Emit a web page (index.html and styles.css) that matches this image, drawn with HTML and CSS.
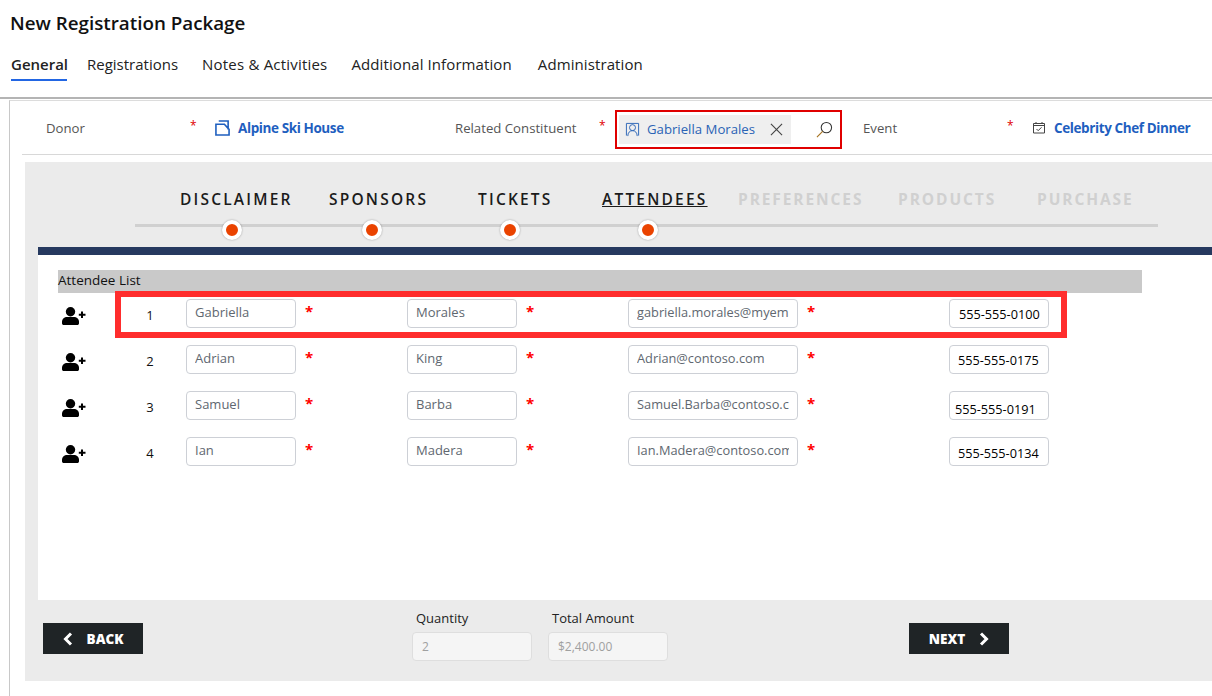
FILE: index.html
```html
<!DOCTYPE html>
<html lang="en">
<head>
    <meta charset="UTF-8">
    <title>New Registration Package</title>
    <link rel="stylesheet" href="styles.css">
</head>
<body>

    <!-- Header -->
    <div class="header">
        <h1 class="title">New Registration Package</h1>
        <div class="tabs">
            <div class="tab tab-active">General</div>
            <div class="tab tab-reg">Registrations</div>
            <div class="tab tab-notes">Notes &amp; Activities</div>
            <div class="tab tab-info">Additional Information</div>
            <div class="tab">Administration</div>
        </div>
    </div>

    <div class="content">
        <!-- Donor / constituent / event -->
        <div class="fields">
            <div class="field-label label-donor">Donor</div>
            <div class="req req-donor">*</div>
            <svg class="icon-account" viewBox="0 0 16 17"><path d="M4 1h10v9M1 4.500h9l5 5.500v6H1z" fill="none" stroke="#1f5fbf" stroke-width="1.700"/></svg>
            <div class="lookup-link link-donor">Alpine Ski House</div>
            <div class="field-label label-related">Related Constituent</div>
            <div class="req req-related">*</div>
            <div class="lookup">
                <div class="lookup-tag">
                    <svg class="icon-contact" viewBox="0 0 16 16"><path d="M1.500 14.500v-13h13v13" fill="none" stroke="#2a63b5"/><circle cx="8" cy="6" r="3.200" fill="none" stroke="#2a63b5"/><path d="M3 15c0-3.500 2-5.800 5-5.800s5 2.300 5 5.800" fill="none" stroke="#2a63b5"/></svg>
                    <span class="lookup-name">Gabriella Morales</span>
                    <svg class="icon-close" viewBox="0 0 14 14"><path d="M1 1l12 12M13 1L1 13" stroke="#444" stroke-width="1.200"/></svg>
                </div>
                <svg class="icon-search" viewBox="0 0 18 18"><circle cx="11" cy="7" r="5.500" fill="none" stroke="#333" stroke-width="1.100"/><path d="M7 11l-6 6" stroke="#a5721f" stroke-width="1.200"/></svg>
            </div>
            <div class="field-label label-event">Event</div>
            <div class="req req-event">*</div>
            <svg class="icon-calendar" viewBox="0 0 12 12"><path d="M.5 2h11v9.500H.5zM.5 4h11M3 .5V2M9 .5V2" fill="none" stroke="#444"/><path d="M3.500 7.500l1.700 1.700 3.300-3.400" fill="none" stroke="#444"/></svg>
            <div class="lookup-link">Celebrity Chef Dinner</div>
        </div>

        <div class="panel">
            <!-- Wizard steps -->
            <div class="steps">
                <div class="step step-1">DISCLAIMER</div>
                <div class="step step-2">SPONSORS</div>
                <div class="step step-3">TICKETS</div>
                <div class="step step-4 step-current">ATTENDEES</div>
                <div class="step step-5 step-off">PREFERENCES</div>
                <div class="step step-6 step-off">PRODUCTS</div>
                <div class="step step-7 step-off">PURCHASE</div>
            </div>
            <div class="track">
                <div class="dot dot-1"></div>
                <div class="dot dot-2"></div>
                <div class="dot dot-3"></div>
                <div class="dot dot-4"></div>
            </div>

            <!-- Attendees -->
            <div class="sheet">
                <div class="list-title">Attendee List</div>

                <div class="row">
                    <svg class="icon-add" viewBox="0 0 24 18"><use href="#user-plus"/></svg>
                    <div class="num">1</div>
                    <div class="cell"><div class="input"><div class="input-text">Gabriella</div></div><span class="star">*</span></div>
                    <div class="cell"><div class="input"><div class="input-text">Morales</div></div><span class="star">*</span></div>
                    <div class="cell cell-email"><div class="input input-email"><div class="input-text">gabriella.morales@myemail.com</div></div><span class="star">*</span></div>
                    <div class="input input-phone phone-a">555-555-0100</div>
                </div>
                <div class="row">
                    <svg class="icon-add" viewBox="0 0 24 18"><use href="#user-plus"/></svg>
                    <div class="num">2</div>
                    <div class="cell"><div class="input"><div class="input-text">Adrian</div></div><span class="star">*</span></div>
                    <div class="cell"><div class="input"><div class="input-text">King</div></div><span class="star">*</span></div>
                    <div class="cell cell-email"><div class="input input-email"><div class="input-text">Adrian@contoso.com</div></div><span class="star">*</span></div>
                    <div class="input input-phone phone-b">555-555-0175</div>
                </div>
                <div class="row">
                    <svg class="icon-add" viewBox="0 0 24 18"><use href="#user-plus"/></svg>
                    <div class="num">3</div>
                    <div class="cell"><div class="input"><div class="input-text">Samuel</div></div><span class="star">*</span></div>
                    <div class="cell"><div class="input"><div class="input-text">Barba</div></div><span class="star">*</span></div>
                    <div class="cell cell-email"><div class="input input-email"><div class="input-text">Samuel.Barba@contoso.com</div></div><span class="star">*</span></div>
                    <div class="input input-phone phone-c">555-555-0191</div>
                </div>
                <div class="row">
                    <svg class="icon-add" viewBox="0 0 24 18"><use href="#user-plus"/></svg>
                    <div class="num">4</div>
                    <div class="cell"><div class="input"><div class="input-text">Ian</div></div><span class="star">*</span></div>
                    <div class="cell"><div class="input"><div class="input-text">Madera</div></div><span class="star">*</span></div>
                    <div class="cell cell-email"><div class="input input-email"><div class="input-text">Ian.Madera@contoso.com</div></div><span class="star">*</span></div>
                    <div class="input input-phone phone-d">555-555-0134</div>
                </div>

                <!-- Red callout round the first row -->
                <div class="callout"></div>
            </div>

            <!-- Footer -->
            <div class="footer">
                <div class="btn btn-back">
                    <svg class="chevron" viewBox="0 0 10 14"><path d="M8 1.500L2.500 7 8 12.500" fill="none" stroke="#fff" stroke-width="3"/></svg>
                    <span>BACK</span>
                </div>
                <div class="total total-qty">
                    <div class="total-label">Quantity</div>
                    <div class="total-box">2</div>
                </div>
                <div class="total">
                    <div class="total-label">Total Amount</div>
                    <div class="total-box">$2,400.00</div>
                </div>
                <div class="btn btn-next">
                    <span>NEXT</span>
                    <svg class="chevron" viewBox="0 0 10 14"><path d="M2 1.500L7.500 7 2 12.500" fill="none" stroke="#fff" stroke-width="3"/></svg>
                </div>
            </div>
        </div>
    </div>

    <svg class="defs" width="0" height="0">
        <symbol id="user-plus" viewBox="0 0 24 18">
            <circle cx="8.500" cy="4.700" r="4.700" fill="#000"/>
            <path d="M0 15c0-3.300 2.500-5 5-5h7c2.500 0 5 1.700 5 5v1.200c0 1-.8 1.800-1.800 1.800H1.800C.8 18 0 17.200 0 16.200z" fill="#000"/>
            <path d="M20 4.500v6.500M16.800 7.700h6.700" stroke="#000" stroke-width="2"/>
        </symbol>
    </svg>

</body>
</html>
```

FILE: styles.css
```css
body {
    margin: 0;
    width: 1212px;
    height: 696px;
    overflow: hidden;
    background-color: #fff;
    font-family: "Open Sans", sans-serif;
    color: #111;
}

/* Header */
.header {
    height: 99px;
    padding-left: 11px;
    box-sizing: border-box;
    border-bottom: 2px solid #b4b4b4;
}

.title {
    margin: 0 0 0 -1px;
    padding-top: 10px;
    font-size: 18.800px;
    line-height: 27px;
    font-weight: 600;
    color: #111;
}

.tabs {
    display: flex;
    margin-top: 15px;
}

.tab {
    font-size: 15px;
    line-height: 25px;
    letter-spacing: 0.1px;
    padding-bottom: 2px;
    color: #222;
}

.tab-active {
    width: 56px;
    margin-right: 20px;
    letter-spacing: 0;
    font-weight: 600;
    border-bottom: 2px solid #2266e3;
}

.tab-reg {
    margin-right: 24px;
    letter-spacing: 0;
}

.tab-notes {
    margin-right: 24px;
    letter-spacing: 0.2px;
}

.tab-info {
    margin-right: 26px;
}

/* Content */
.content {
    height: 596px;
    margin: 1px 0 0 9px;
    padding-left: 12px;
    border-left: 1px solid #c8c8c8;
    border-top: 1px solid #dcdcdc;
    overflow: hidden;
}

.fields {
    display: flex;
    align-items: center;
    height: 53px;
    border-bottom: 1px solid #d8d8d8;
    font-size: 13.200px;
}

.field-label {
    flex: none;
    color: #555;
}

.label-donor {
    margin-left: 24px;
    width: 144px;
}

.req {
    flex: none;
    color: #e00000;
    font-size: 12px;
    margin-top: -4px;
}

.req-donor {
    width: 25px;
}

.link-donor {
    width: 217px;
    margin-left: 1px;
    letter-spacing: -0.3px;
}

.icon-account {
    flex: none;
    width: 15px;
    height: 16px;
    margin-right: 7px;
}

.lookup-link {
    flex: none;
    color: #1f5fbf;
    font-weight: 700;
    font-size: 13.500px;
    letter-spacing: -0.4px;
    white-space: nowrap;
}

.label-related {
    width: 144px;
}

.req-related {
    width: 16px;
}

.lookup {
    flex: none;
    display: flex;
    align-items: center;
    justify-content: space-between;
    width: 227px;
    height: 39px;
    margin: 4px 21px 0 0;
    padding: 0 7px 0 2px;
    box-sizing: border-box;
    border: 2px solid #e00000;
}

.lookup-tag {
    display: flex;
    align-items: center;
    width: 172px;
    height: 29px;
    padding-left: 6px;
    box-sizing: border-box;
    background-color: #efefef;
}

.lookup-name {
    color: #2a63b5;
    width: 123px;
    margin: -1px 0 0 7px;
    white-space: nowrap;
}

.icon-contact {
    width: 15px;
    height: 15px;
}

.icon-close {
    width: 13px;
    height: 13px;
}

.icon-search {
    width: 17px;
    height: 17px;
}

.label-event {
    width: 144px;
}

.req-event {
    width: 26px;
}

.icon-calendar {
    flex: none;
    width: 12px;
    height: 13px;
    margin-right: 9px;
}

/* Gray panel */
.panel {
    position: relative;
    margin: 7px 0 0 3px;
    height: 519px;
    padding-left: 13px;
    background-color: #ebebeb;
}

/* Wizard */
.steps {
    display: flex;
    height: 62px;
}

.step {
    padding-top: 27px;
    font-size: 15.500px;
    line-height: 20px;
    font-weight: 600;
    letter-spacing: 2.200px;
    white-space: nowrap;
    color: #1b1b1b;
}

.step-1 { margin-left: 142px; width: 149px; }
.step-2 { width: 149px; }
.step-3 { width: 124px; }
.step-4 { width: 136px; }
.step-5 { width: 160px; }
.step-6 { width: 139px; }

.step-current {
    text-decoration: underline;
}

.step-off {
    color: #d0d0d0;
    font-weight: 700;
    letter-spacing: 1.900px;
}

.track {
    position: relative;
    height: 3px;
    width: 1023px;
    margin-left: 97px;
    background-color: #d0d0d0;
    margin-bottom: 20px;
}

.dot {
    position: absolute;
    top: -4px;
    width: 12px;
    height: 12px;
    border: 4px solid #fff;
    border-radius: 50%;
    background-color: #ea4300;
    box-shadow: 0 0 2px rgba(0, 0, 0, 0.35);
}

.dot-1 { left: 87px; }
.dot-2 { left: 227px; }
.dot-3 { left: 365px; }
.dot-4 { left: 503px; }

/* Attendee list */
.sheet {
    position: relative;
    height: 353px;
    padding: 15px 0 0 20px;
    box-sizing: border-box;
    border-top: 8px solid #26395f;
    background-color: #fff;
}

.list-title {
    width: 1084px;
    height: 23px;
    line-height: 21px;
    margin-bottom: 6px;
    background-color: #c9c9c9;
    font-size: 13.500px;
    color: #111;
}

.row {
    display: flex;
    height: 46px;
}

.icon-add {
    width: 24px;
    height: 18px;
    margin: 8px 0 0 4px;
}

.num {
    width: 100px;
    padding: 8px 0 0 28px;
    text-align: center;
    font-size: 13px;
    line-height: 17px;
    box-sizing: border-box;
}

.cell {
    display: flex;
    width: 221px;
}

.cell-email {
    width: 321px;
}

.input {
    width: 110px;
    height: 29px;
    padding: 4px 8px 0 8px;
    box-sizing: border-box;
    border: 1px solid #cdd0d6;
    border-radius: 4px;
    background-color: #fff;
    font-size: 13px;
    line-height: 17px;
    color: #606770;
}

.input-email {
    width: 170px;
    font-size: 12.800px;
}

.input-text {
    overflow: hidden;
    white-space: nowrap;
}

.star {
    margin: 2px 0 0 9px;
    color: #f00;
    font-size: 15px;
    line-height: 20px;
    font-weight: 700;
}

.input-phone {
    width: 100px;
    color: #000;
    font-size: 12.700px;
    white-space: nowrap;
}

.phone-a { padding: 6px 0 0 9px; }
.phone-b { padding: 6px 0 0 8px; }
.phone-c { padding: 9px 0 0 5px; }
.phone-d { padding: 7px 0 0 8px; }

.callout {
    position: absolute;
    left: 77px;
    top: 36px;
    width: 952px;
    height: 47px;
    box-sizing: border-box;
    border: 6px solid #ff2d2d;
}

/* Footer */
.footer {
    display: flex;
    height: 81px;
}

.btn {
    display: flex;
    align-items: center;
    justify-content: center;
    gap: 14px;
    width: 100px;
    height: 31px;
    margin-top: 23px;
    background-color: #1f2426;
    color: #fff;
    font-size: 13.500px;
    font-weight: 800;
}

.btn-back {
    margin-left: 5px;
    margin-right: 269px;
}

.btn-next {
    margin-left: 241px;
}

.chevron {
    width: 10px;
    height: 14px;
}

.total {
    width: 120px;
}

.total-qty {
    margin-right: 16px;
}

.total-label {
    padding: 9px 0 0 4px;
    font-size: 13px;
    line-height: 18px;
    height: 32px;
    box-sizing: border-box;
    color: #222;
}

.total-box {
    height: 29px;
    padding: 5px 0 0 9px;
    box-sizing: border-box;
    border: 1px solid #dedede;
    border-radius: 4px;
    background-color: #f5f5f5;
    font-size: 12px;
    line-height: 18px;
    color: #a0a0a0;
}

.defs {
    position: absolute;
}
```
